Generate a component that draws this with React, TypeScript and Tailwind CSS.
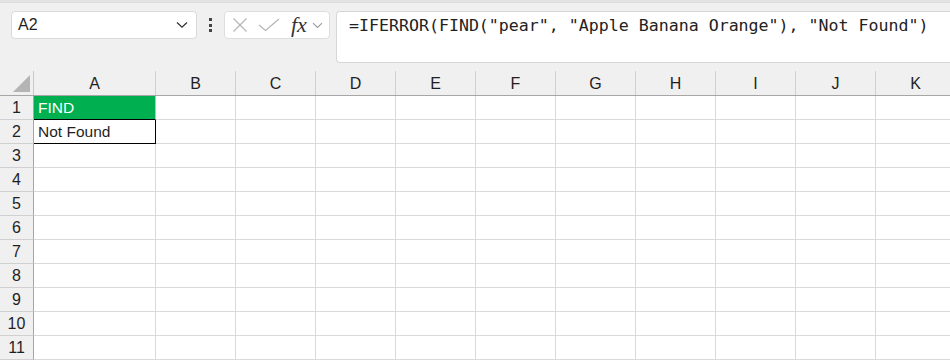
import React from "react";

const cols = ["A", "B", "C", "D", "E", "F", "G", "H", "I", "J", "K"];
const rows = [1, 2, 3, 4, 5, 6, 7, 8, 9, 10, 11];

function colW(c: string) {
  return c === "A" ? "w-[122px]" : "w-[80px]";
}

export default function App() {
  return (
    <div
      className="w-[950px] h-[360px] overflow-hidden bg-[#f0f0f0] text-[#1f1f1f]"
      style={{ fontFamily: '"Liberation Sans", Arial, sans-serif' }}
    >
      {/* top strip */}
      <div className="h-[3px] bg-[#e3e3e3] border-b border-[#dcdcdc]" />
      {/* toolbar */}
      <div className="h-[68px] flex items-start pt-[8px] pl-[11px]">
        {/* name box */}
        <div className="w-[186px] h-[28px] bg-white border border-[#d9d9d9] rounded-[4px] flex items-center pl-[6px] pr-[8px] shrink-0">
          <span className="text-[16px] flex-1 leading-none">A2</span>
          <svg width="12" height="8" viewBox="0 0 12 8">
            <path d="M1 1.5 L6 6.2 L11 1.5" fill="none" stroke="#333" strokeWidth="1.3" />
          </svg>
        </div>
        {/* dots */}
        <div className="w-[27px] h-[28px] flex flex-col items-center justify-center gap-[2.5px] shrink-0">
          <div className="w-[3px] h-[3px] bg-[#444]" />
          <div className="w-[3px] h-[3px] bg-[#444]" />
          <div className="w-[3px] h-[3px] bg-[#444]" />
        </div>
        {/* fx box */}
        <div className="w-[106px] h-[28px] bg-white border border-[#dedede] rounded-[4px] flex items-center pl-[7px] shrink-0">
          <svg width="16" height="16" viewBox="0 0 16 16">
            <path d="M1.5 1.5 L14.5 14.5 M14.5 1.5 L1.5 14.5" fill="none" stroke="#b5b5b5" strokeWidth="1.2" />
          </svg>
          <svg width="22" height="14" viewBox="0 0 22 14" className="ml-[10px]">
            <path d="M1 7 L7.5 12.5 L21 1" fill="none" stroke="#b5b5b5" strokeWidth="1.2" />
          </svg>
          <span
            className="ml-[11px] text-[22px] italic leading-none text-[#333]"
            style={{ fontFamily: '"Liberation Serif", "Times New Roman", serif' }}
          >
            fx
          </span>
          <svg width="11" height="7" viewBox="0 0 11 7" className="ml-[5px]">
            <path d="M1 1.2 L5.5 5.5 L10 1.2" fill="none" stroke="#9a9a9a" strokeWidth="1.1" />
          </svg>
        </div>
        {/* formula bar */}
        <div className="ml-[6px] flex-1 h-[52px] bg-white border border-[#d6d6d6] border-r-0 rounded-l-[4px] pl-[12px] pt-[4px]">
          <div
            className="text-[16.6px] leading-[20px] text-[#222] whitespace-pre"
            style={{ fontFamily: '"DejaVu Sans Mono", "Liberation Mono", monospace' }}
          >
            =IFERROR(FIND("pear", "Apple Banana Orange"), "Not Found")
          </div>
        </div>
      </div>
      {/* grid */}
      <div className="flex flex-col w-[960px]">
        {/* column header */}
        <div className="flex h-[25px] border-b border-[#a6a6a6] bg-[#f0f0f0]">
          <div className="w-[34px] h-full border-r border-[#c8c8c8] flex items-end justify-end pr-[3px] pb-[3px] shrink-0">
            <svg width="17" height="17" viewBox="0 0 17 17">
              <path d="M17 0 L17 17 L0 17 Z" fill="#b4b4b4" />
            </svg>
          </div>
          {cols.map((c) => (
            <div
              key={c}
              className={`${colW(c)} h-full border-r border-[#d0d0d0] flex items-center justify-center text-[16px] pt-[1px] shrink-0`}
            >
              {c}
            </div>
          ))}
        </div>
        {rows.map((r) => (
          <div key={r} className="flex h-[24px]">
            <div className="w-[34px] h-full border-r border-b border-r-[#a6a6a6] border-b-[#d0d0d0] bg-[#f0f0f0] flex items-center justify-center text-[16px] shrink-0">
              {r}
            </div>
            {cols.map((c) => {
              let cls = "bg-white border-r border-b border-[#dadada]";
              let content: React.ReactNode = null;
              if (c === "A" && r === 1) {
                cls = "bg-[#00b050] border-r border-r-[#c0c0c0] border-b border-b-black text-white";
                content = "FIND";
              } else if (c === "A" && r === 2) {
                cls = "bg-white border-r border-b border-black";
                content = "Not Found";
              }
              return (
                <div
                  key={c}
                  className={`${colW(c)} h-full ${cls} flex items-center pl-[4px] text-[15.5px] shrink-0`}
                >
                  {content}
                </div>
              );
            })}
          </div>
        ))}
      </div>
    </div>
  );
}
